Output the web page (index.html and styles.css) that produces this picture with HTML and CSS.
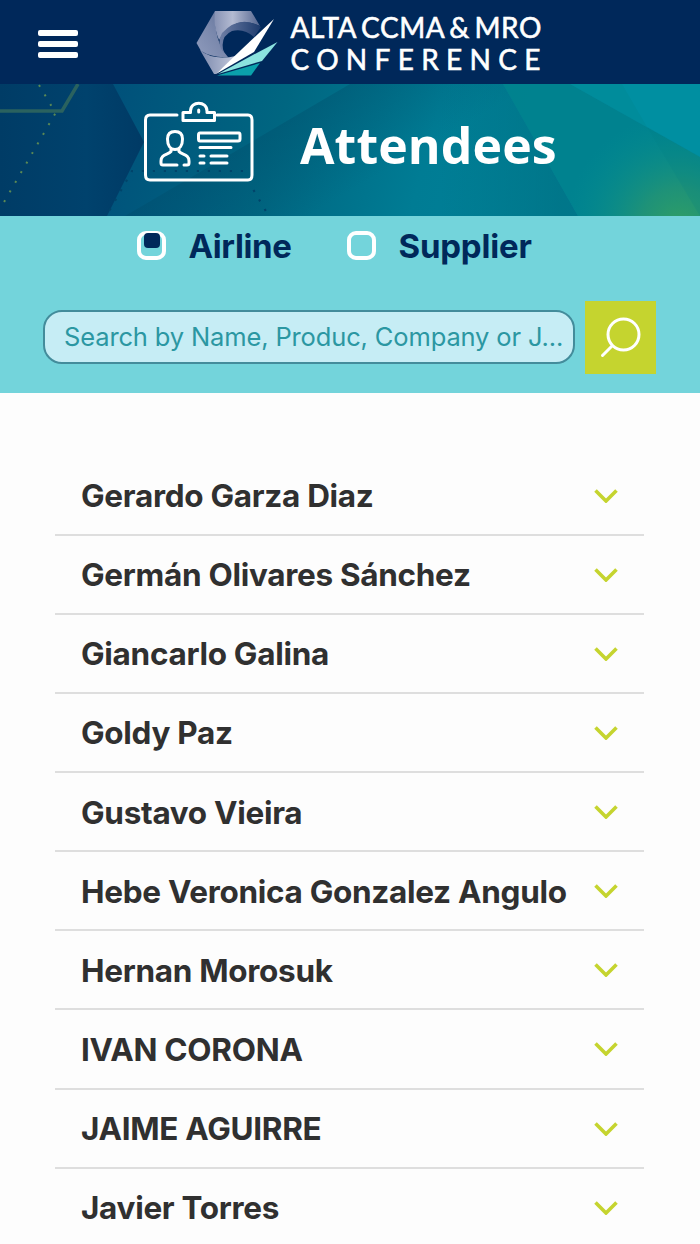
FILE: index.html
```html
<!DOCTYPE html>
<html lang="en">
<head>
<meta charset="utf-8">
<title>Attendees</title>
<link rel="stylesheet" href="styles.css">
</head>
<body>
<header class="topbar">
  <button class="menu" aria-label="Menu"><span></span><span></span><span></span></button>
  <svg class="logo" width="350" height="84" viewBox="195 0 350 84" role="img" aria-label="ALTA CCMA &amp; MRO Conference">
    <defs>
      <linearGradient id="ga" x1="0" y1="1" x2="1" y2="0"><stop offset="0" stop-color="#8f9bbc"/><stop offset=".5" stop-color="#7b89ad"/><stop offset="1" stop-color="#5f7099"/></linearGradient>
      <linearGradient id="gb" x1="0" y1="0" x2="1" y2="0"><stop offset="0" stop-color="#8792b4"/><stop offset=".4" stop-color="#b4bbd2"/><stop offset="1" stop-color="#53658f"/></linearGradient>
      <linearGradient id="gc" x1="0" y1="0" x2="1" y2="0"><stop offset="0" stop-color="#6f7fa6"/><stop offset="1" stop-color="#1c3a6c"/></linearGradient>
      <linearGradient id="gd" x1="0" y1="0" x2="1" y2="0"><stop offset="0" stop-color="#7b89ad"/><stop offset="1" stop-color="#c3c9dc"/></linearGradient>
    </defs>
    <path fill="url(#ga)" d="M215 11L196.500 43L201 51Q212 58 228 57Q214 42 215 11Z"/>
    <path fill="url(#gb)" d="M215 11H251L260 26Q234 14 219 40Q213 26 215 11Z"/>
    <path fill="url(#gc)" d="M222 33Q240 14 261 27L254 37Q244 28 232 31Q219 37 224 53Q216 44 222 33Z"/>
    <path fill="url(#gd)" d="M200 50Q213 61 236 56L216 74H214Z"/>
    <path fill="#fff" d="M274 19L254 52L216 74Q245 46 274 19Z"/>
    <path fill="#8be3df" d="M277.500 42L262 61L218 74L251 56Z"/>
    <path fill="#0ba1ab" d="M260 63L251 75.500H217Z"/>
    <g class="logo-text">
      <text x="290.500" y="37.500" textLength="251" lengthAdjust="spacing">ALTA CCMA &amp; MRO</text>
      <text x="290.500" y="70" textLength="250">CONFERENCE</text>
    </g>
  </svg>
</header>
<section class="banner">
  <svg class="banner-art" width="700" height="132" viewBox="0 84 700 132" aria-hidden="true">
    <defs>
      <linearGradient id="base" gradientUnits="userSpaceOnUse" x1="110" y1="84" x2="590" y2="216"><stop offset="0" stop-color="#00507a"/><stop offset=".35" stop-color="#006681"/><stop offset=".65" stop-color="#007c94"/><stop offset="1" stop-color="#00839a"/></linearGradient>
      <linearGradient id="left" x1="0" y1="0" x2="1" y2="0"><stop offset="0" stop-color="#003c66"/><stop offset=".6" stop-color="#00426d"/><stop offset="1" stop-color="#003a65"/></linearGradient>
      <linearGradient id="shade" gradientUnits="userSpaceOnUse" x1="220" y1="140" x2="275" y2="235"><stop offset="0" stop-color="#004a68" stop-opacity=".4"/><stop offset="1" stop-color="#004a68" stop-opacity="0"/></linearGradient>
      <linearGradient id="edge" gradientUnits="userSpaceOnUse" x1="440" y1="0" x2="560" y2="0"><stop offset="0" stop-color="#006f80" stop-opacity="0"/><stop offset="1" stop-color="#006f80" stop-opacity=".6"/></linearGradient>
      <radialGradient id="green" gradientUnits="userSpaceOnUse" cx="680" cy="228" r="115"><stop offset="0" stop-color="#32a063"/><stop offset=".35" stop-color="#269672" stop-opacity=".8"/><stop offset="1" stop-color="#009095" stop-opacity="0"/></radialGradient>
    </defs>
    <path fill="url(#base)" d="M0 84H700V216H0Z"/>
    <path fill="url(#shade)" d="M350 84H503L578 216H125Z"/>
    <path fill="url(#edge)" d="M400 84H503L578 216H400Z"/>
    <path fill="url(#left)" d="M0 84H113L144 142L107 216H0Z"/>
    <path fill="#00838d" opacity=".85" d="M503 84H570L700 157V216H578Z"/>
    <path fill="#008c9b" d="M570 84H700V157Z"/>
    <path fill="#0091a7" opacity=".5" d="M622 84H700V157L647 127Z"/>
    <path fill="url(#green)" d="M503 84H570L700 157V216H578Z"/>
    <path fill="#007b82" opacity=".16" d="M647 127L700 157V216Z"/>
    <path class="gold-line" d="M0 111H62L78 84"/>
    <path class="gold-dots" d="M39 85L55.500 113L0 209"/>
    <path class="navy-dots" d="M243 171H132L108 213M253.500 190L267 213"/>
  </svg>
  <div class="banner-content">
    <svg class="badge" width="110" height="82" viewBox="144 101 110 82" aria-hidden="true">
      <path d="M177 115H150Q145.500 115 145.500 120V175Q145.500 180 150 180H248Q252 180 252 175V120Q252 115 248 115H217"/>
      <path d="M183 112.500H190.500V111C190.500 100.500 207 100.500 207 111V112.500H214.500V120.500H183ZM198.700 110V112"/>
      <path d="M175 131.500C180 131.500 182.500 134.500 182.500 139C182.500 145 180 149.500 175 149.500C170 149.500 167.500 145 167.500 139C167.500 134.500 170 131.500 175 131.500ZM171 149V151.500C168 155 161 154 161 161V163Q161 165 163 165H177M179 149V151.500C182 155 189 154 189 161V163Q189 165 187 165H184"/>
      <path d="M200 133H239Q240 133 240 135V139Q240 141 238 141H200Q198.500 141 198.500 139V135Q198.500 133 200 133ZM200 147.500H231M200 156H204M211 156H227M200 163H204M211 163H227"/>
    </svg>
    <h1>Attendees</h1>
  </div>
</section>
<form class="filters">
  <div class="options">
    <div class="option airline"><span class="box checked"></span><span>Airline</span></div>
    <div class="option supplier"><span class="box"></span><span>Supplier</span></div>
  </div>
  <div class="search">
    <div class="field">Search by Name, Produc, Company or J...</div>
    <button class="go" type="button" aria-label="Search"><svg width="71" height="72" viewBox="0 0 71 72"><circle cx="38.500" cy="32.500" r="15.500"/><path d="M27 44L17.500 53.500"/></svg></button>
  </div>
</form>
<main class="list">
  <div class="row"><span>Gerardo Garza Diaz</span><svg class="chev" viewBox="0 0 24 14"><path d="M1.500 1.500L12 12L22.500 1.500"/></svg></div>
  <div class="row"><span>Germán Olivares Sánchez</span><svg class="chev" viewBox="0 0 24 14"><path d="M1.500 1.500L12 12L22.500 1.500"/></svg></div>
  <div class="row"><span>Giancarlo Galina</span><svg class="chev" viewBox="0 0 24 14"><path d="M1.500 1.500L12 12L22.500 1.500"/></svg></div>
  <div class="row"><span>Goldy Paz</span><svg class="chev" viewBox="0 0 24 14"><path d="M1.500 1.500L12 12L22.500 1.500"/></svg></div>
  <div class="row"><span>Gustavo Vieira</span><svg class="chev" viewBox="0 0 24 14"><path d="M1.500 1.500L12 12L22.500 1.500"/></svg></div>
  <div class="row"><span>Hebe Veronica Gonzalez Angulo</span><svg class="chev" viewBox="0 0 24 14"><path d="M1.500 1.500L12 12L22.500 1.500"/></svg></div>
  <div class="row"><span>Hernan Morosuk</span><svg class="chev" viewBox="0 0 24 14"><path d="M1.500 1.500L12 12L22.500 1.500"/></svg></div>
  <div class="row"><span>IVAN CORONA</span><svg class="chev" viewBox="0 0 24 14"><path d="M1.500 1.500L12 12L22.500 1.500"/></svg></div>
  <div class="row"><span>JAIME AGUIRRE</span><svg class="chev" viewBox="0 0 24 14"><path d="M1.500 1.500L12 12L22.500 1.500"/></svg></div>
  <div class="row"><span>Javier Torres</span><svg class="chev" viewBox="0 0 24 14"><path d="M1.500 1.500L12 12L22.500 1.500"/></svg></div>
</main>
</body>
</html>
```
FILE: styles.css
```css
* { box-sizing: border-box; }
body { margin: 0; width: 700px; height: 1244px; overflow: hidden; background: #fdfdfd; font-family: Inter, "Liberation Sans", sans-serif; }
button { border: 0; padding: 0; background: none; }
svg { display: block; flex: none; }

.topbar { height: 84px; background: #00285a; display: flex; padding-left: 38px; }
.menu { width: 40px; margin-right: 117px; display: flex; flex-direction: column; gap: 5px; padding-top: 30px; }
.menu span { width: 40px; height: 6px; background: #fff; border-radius: 2px; }
.logo-text { font-family: Lato, sans-serif; font-size: 28px; word-spacing: -3px; fill: #fff; stroke: #fff; stroke-width: .6px; }

.banner { height: 132px; display: grid; overflow: hidden; }
.banner-art, .banner-content { grid-area: 1 / 1; }
.gold-line { fill: none; stroke: #2a625f; stroke-width: 3.5px; }
.gold-dots { fill: none; stroke: #5a8955; stroke-width: 2px; stroke-dasharray: 2 9.1; }
.navy-dots { fill: none; stroke: #00446a; stroke-width: 2.2px; stroke-dasharray: 2.2 8.8; }
.banner-content { display: flex; padding: 17px 0 0 144px; }
.badge { fill: none; stroke: #fff; stroke-width: 3px; stroke-linecap: round; stroke-linejoin: round; }
.banner h1 { margin: 8px 0 0 46px; font: 700 50px/72px "Open Sans", sans-serif; letter-spacing: .1px; color: #fff; white-space: nowrap; }

.filters { height: 177px; background: #73d4db; }
.options { display: flex; height: 60px; padding: 0 0 0 137px; color: #00285a; font-weight: 700; font-size: 33px; line-height: 60px; }
.option { display: flex; white-space: nowrap; }
.airline { width: 210px; letter-spacing: -.4px; }
.supplier { letter-spacing: -.2px; }
.box { width: 29px; height: 29px; margin: 15px 22.500px 0 0; border: 4px solid #fff; border-radius: 9px; display: flex; justify-content: center; flex: none; }
.checked::before { content: ""; width: 16px; height: 15px; margin-top: -2px; border-radius: 4px; background: #00285a; flex: none; }
.search { display: flex; align-items: flex-start; padding: 25px 0 0 43px; }
.field { width: 532px; height: 54px; margin: 9px 10px 0 0; padding-left: 19px; border: 2px solid #438c9b; border-radius: 19px; background: #c6edf5; color: #2b97a2; font-size: 25.500px; line-height: 50px; white-space: nowrap; letter-spacing: -.14px; }
.go { width: 71px; height: 73px; background: #c5d42f; }
.go svg { fill: none; stroke: #fff; stroke-width: 3px; stroke-linecap: round; }

.list { padding: 63.500px 56px 0 55px; }
.row { height: 79.125px; border-bottom: 2px solid #dedede; padding: 1px 26px 0; display: flex; align-items: center; justify-content: space-between; color: #303030; font-weight: 700; font-size: 31.500px; white-space: nowrap; letter-spacing: -.3px; }
.chev { width: 24px; height: 14px; fill: none; stroke: #c5d42f; stroke-width: 3.6px; }
```
